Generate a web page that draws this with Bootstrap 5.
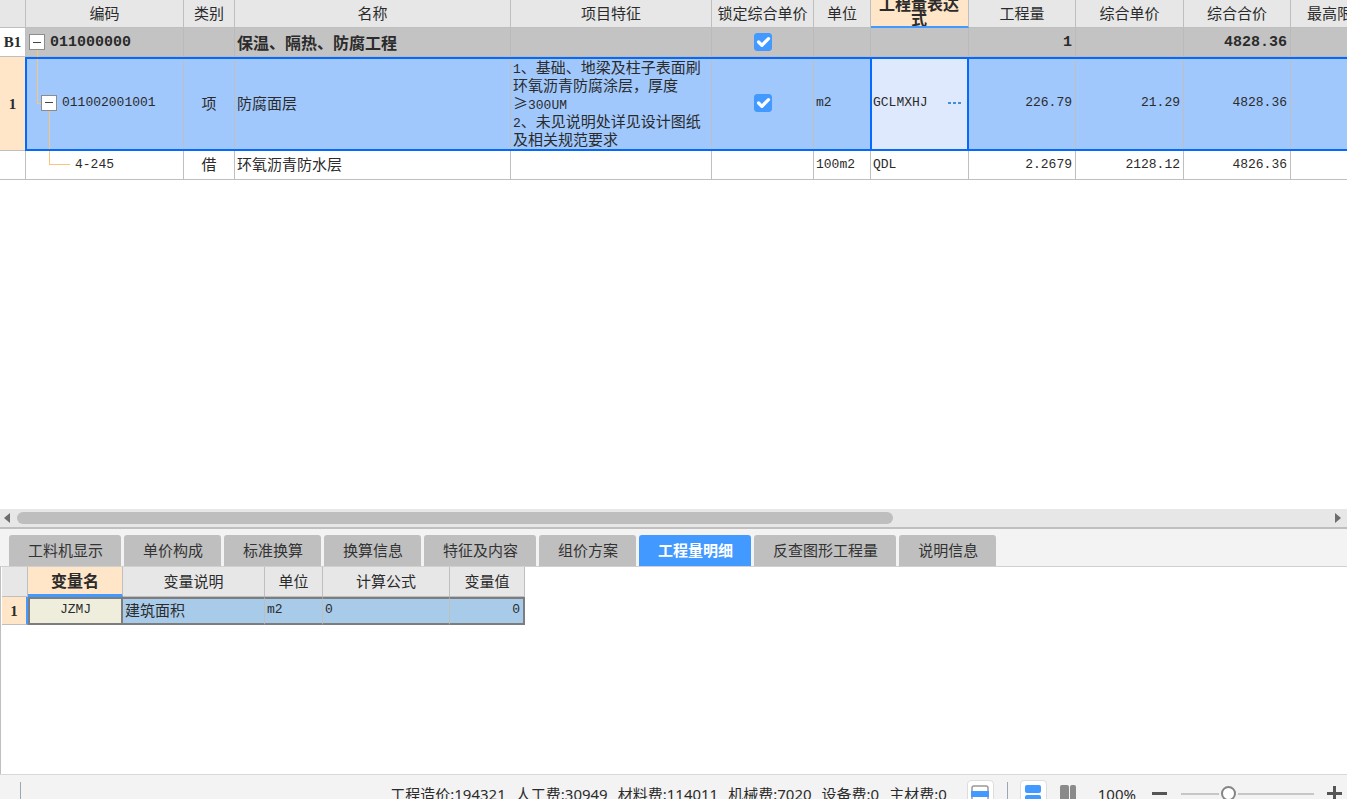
<!DOCTYPE html>
<html lang="zh-CN">
<head>
<meta charset="utf-8">
<meta name="viewport" content="width=device-width, initial-scale=1">
<title>工程量明细</title>
<link href="https://cdn.jsdelivr.net/npm/bootstrap@5.3.0/dist/css/bootstrap.min.css" rel="stylesheet">
<style>
:root { --blue: #4299ff; --sel: #0569fb; --line: #bfbfbf; --head: #e7e7e7; --peach: #ffe6c8; --tree: #fac578; }
body { font-family: "Noto Sans", "Noto Sans CJK SC", sans-serif; font-size: 15px; line-height: 18px; color: #2b2b2b; background: #f3f3f3; }
.pane-top { flex: 510 1 0; min-height: 0; }
.pane-bottom { flex: 207 1 0; min-height: 0; border-top: 1px solid #d0d0d0; border-left: 1px solid var(--line); padding-left: 1px; }
.num { font-family: "Liberation Mono", "Noto Sans CJK SC", monospace; font-size: 13px; line-height: 1; }

.gridview { table-layout: fixed; border-collapse: separate; border-spacing: 0; font-family: "Noto Sans CJK SC", sans-serif; }
.gridview th, .gridview td { padding: 0 2px 2px; border-right: 1px solid var(--line); border-bottom: 1px solid var(--line); vertical-align: middle; position: relative; white-space: nowrap; }
.gridview thead th { background: var(--head); font-weight: 400; text-align: center; padding: 0 2px 2px; }
.gridview thead th.current { background: var(--peach); font-weight: 700; font-size: 16px; border-bottom: 2px solid var(--blue); }
.gridview tbody th { text-align: center; padding: 0; background: #fff; font-family: "Liberation Serif", serif; font-weight: 700; }
.gridview tbody th.current { background: var(--peach); }
.gridview td.text-end { padding-right: 3px; }
.bill { width: 1384px; }
.bill thead tr { height: 28px; }
.bill tbody tr { height: 29px; }
.bill tbody tr.picked { height: 94px; }
.gridview.bill thead th.current { padding: 0; }
.head-wrap { height: 26px; line-height: 15px; white-space: normal; padding: 0 7px 5px 6px; }
.gridview .section-row td { background: #c3c3c3; border-color: #bababa; font-weight: 700; font-size: 16px; padding-bottom: 0; }
.gridview .section-row .num { font-size: 15px; }
.picked td { background: #a0c8fd; }
.picked td::before { content: ""; position: absolute; inset: 0 -1px -1px 0; border: solid var(--sel); border-width: 2px 0; pointer-events: none; z-index: 1; }
.picked td.code::before { border-left-width: 2px; left: -1px; }
.picked td.editing { background: #dfe9fd; }
.picked td.editing::before { border-width: 2px; left: -1px; }
.more { color: #3f8fdc; }

.tree-item { gap: 5px; padding-left: 1px; }
.tree-item.level-2 { padding-left: 13px; }
.tree-item.level-3 { padding-left: 47px; }
.toggle { width: 16px; height: 16px; padding: 0; background: #fff; border: 1px solid #8c8c8c; display: grid; place-items: center; position: relative; z-index: 2; }
.toggle::before { content: ""; width: 8px; height: 1px; background: #444; }
.branch { position: absolute; border-left: 1px solid var(--tree); }
.from-root { left: 11px; top: 21px; bottom: -1px; }
.to-item { left: 11px; top: 0; height: 47px; width: 5px; border-bottom: 1px solid var(--tree); }
.from-item { left: 23px; top: 54px; bottom: 0; }
.to-leaf { left: 23px; top: 0; height: 14px; width: 21px; border-bottom: 1px solid var(--tree); }
.form-check-input.lock[type=checkbox] { width: 18px; height: 18px; margin-top: 0; margin-bottom: 0; border-radius: 3px; display: block; background-size: 22px; background-position: center; }
.lock:checked { background-color: var(--blue); border-color: var(--blue); }

.hbar { height: 18px; background: var(--head); }
.hbar button { width: 17px; height: 18px; padding: 0 3px 0 0; border: 0; background: none; display: grid; place-items: center; }
.hbar button.to-right { width: 14px; padding-right: 4px; }
.hbar-thumb { height: 12px; width: 66.6%; border-radius: 6px; background: #bebebe; }
.splitter { height: 2px; background: #bfbfbf; }

.detail-tabs { height: 37px; padding: 6px 9px 0; gap: 3px; }
.detail-tabs .nav-link { height: 31px; padding: 0 18px 0 19px; border-radius: 3px 3px 0 0; background: #bfbfbf; color: #333; line-height: 31px; white-space: nowrap; }
.detail-tabs .nav-link.active { background: var(--blue); color: #fff; font-weight: 700; }
.vars { width: 523px; }
.vars thead tr { height: 30px; }
.vars tbody tr { height: 28px; }
.vars thead th.current { border-bottom-width: 3px; }
.gridview.vars tbody td { background: #a9cbea; border-bottom: 2px solid #7d7d7d; border-top: 2px solid #7d7d7d; padding-bottom: 3px; }
.vars tbody td:last-child { border-right: 2px solid #7d7d7d; }
.gridview.vars tbody td.editing { background: #efeedd; border: 2px solid #7d7d7d; }
.vars tbody th.current { border-right: 2px solid var(--blue); }

.status { height: 25px; border-top: 1px solid #d8d8d8; overflow: hidden; }
.status-inner { height: 37px; padding: 0 5px 0 20px; }
.status .tick-line { width: 1px; height: 24px; background: #9aa7b5; }
.totals { gap: 10px; margin-right: 20px; white-space: nowrap; }
.tool { width: 27px; height: 27px; padding: 0; border: 1px solid transparent; border-radius: 4px; background: none; display: grid; place-items: center; }
.tool.on { background: #fff; border-color: #ddd; }
.divider { margin: 0 12px 0 13px; }
.zoomer { -webkit-appearance: none; appearance: none; width: 133px; height: 18px; background: none; margin: 0 13px 0 14px; }
.zoomer::-webkit-slider-runnable-track { height: 2px; background: #c6c6c6; }
.zoomer::-webkit-slider-thumb { -webkit-appearance: none; width: 15px; height: 15px; margin-top: -7px; border-radius: 50%; background: #fff; border: 2px solid #858585; box-shadow: 0 0 0 2px #f3f3f3; }
.plain { border: 0; background: none; padding: 0; display: grid; }
</style>
</head>
<body class="vh-100 d-flex flex-column overflow-hidden">

<main class="pane-top bg-white overflow-hidden">
  <table class="gridview bill">
    <colgroup>
      <col style="width:26px"><col style="width:158px"><col style="width:51px"><col style="width:276px"><col style="width:201px"><col style="width:102px"><col style="width:57px"><col style="width:98px"><col style="width:107px"><col style="width:108px"><col style="width:107px"><col style="width:93px">
    </colgroup>
    <thead>
      <tr>
        <th></th><th>编码</th><th>类别</th><th>名称</th><th>项目特征</th><th>锁定综合单价</th><th>单位</th>
        <th class="current"><div class="head-wrap d-flex align-items-center justify-content-center overflow-hidden">工程量表达式</div></th>
        <th>工程量</th><th>综合单价</th><th>综合合价</th><th>最高限价</th>
      </tr>
    </thead>
    <tbody>
      <tr class="section-row">
        <th>B1</th>
        <td><span class="branch from-root"></span><div class="tree-item d-flex align-items-center"><button class="toggle" aria-label="折叠 011000000"></button><span class="num">011000000</span></div></td>
        <td></td><td>保温、隔热、防腐工程</td><td></td>
        <td><input type="checkbox" class="form-check-input lock mx-auto" aria-label="锁定综合单价 011000000" checked></td>
        <td></td><td></td><td class="text-end num">1</td><td></td><td class="text-end num">4828.36</td><td></td>
      </tr>
      <tr class="picked">
        <th class="current">1</th>
        <td class="code"><span class="branch to-item"></span><span class="branch from-item"></span><div class="tree-item level-2 d-flex align-items-center"><button class="toggle" aria-label="折叠 011002001001"></button><span class="num">011002001001</span></div></td>
        <td class="text-center">项</td><td>防腐面层</td>
        <td><span class="num">1</span>、基础、地梁及柱子表面刷<br>环氧沥青防腐涂层，厚度<br>≥<span class="num">300UM</span><br><span class="num">2</span>、未见说明处详见设计图纸<br>及相关规范要求</td>
        <td><input type="checkbox" class="form-check-input lock mx-auto" aria-label="锁定综合单价 011002001001" checked></td>
        <td class="num">m2</td>
        <td class="editing"><div class="d-flex align-items-center justify-content-between"><span class="num">GCLMXHJ</span><button class="plain more pe-1" aria-label="编辑表达式"><svg width="14" height="4" fill="currentColor"><path d="M0 1h3v2H0zM5 1h3v2H5zM10 1h3v2h-3z"/></svg></button></div></td>
        <td class="text-end num">226.79</td><td class="text-end num">21.29</td><td class="text-end num">4828.36</td><td></td>
      </tr>
      <tr>
        <th></th>
        <td><span class="branch to-leaf"></span><div class="tree-item level-3 d-flex align-items-center"><span class="num">4-245</span></div></td>
        <td class="text-center">借</td><td>环氧沥青防水层</td><td></td><td></td><td class="num">100m2</td><td class="num">QDL</td>
        <td class="text-end num">2.2679</td><td class="text-end num">2128.12</td><td class="text-end num">4826.36</td><td></td>
      </tr>
    </tbody>
  </table>
</main>

<div class="hbar d-flex align-items-center">
  <button aria-label="向左滚动"><svg width="6" height="10"><path d="M6 0v10L0 5z" fill="#6b6b70"/></svg></button>
  <div class="flex-grow-1"><div class="hbar-thumb"></div></div>
  <button class="to-right" aria-label="向右滚动"><svg width="6" height="10"><path d="M0 0v10l6-5z" fill="#6b6b70"/></svg></button>
</div>
<div class="splitter"></div>

<nav class="nav detail-tabs flex-nowrap" aria-label="明细">
  <a class="nav-link" href="#">工料机显示</a>
  <a class="nav-link" href="#">单价构成</a>
  <a class="nav-link" href="#">标准换算</a>
  <a class="nav-link" href="#">换算信息</a>
  <a class="nav-link" href="#">特征及内容</a>
  <a class="nav-link" href="#">组价方案</a>
  <a class="nav-link active" href="#" aria-current="page">工程量明细</a>
  <a class="nav-link" href="#">反查图形工程量</a>
  <a class="nav-link" href="#">说明信息</a>
</nav>

<section class="pane-bottom bg-white overflow-hidden">
  <table class="gridview vars">
    <colgroup><col style="width:26px"><col style="width:95px"><col style="width:142px"><col style="width:58px"><col style="width:127px"><col style="width:75px"></colgroup>
    <thead><tr><th></th><th class="current">变量名</th><th>变量说明</th><th>单位</th><th>计算公式</th><th>变量值</th></tr></thead>
    <tbody><tr><th class="current">1</th><td class="editing text-center num">JZMJ</td><td>建筑面积</td><td class="num">m2</td><td class="num">0</td><td class="num text-end">0</td></tr></tbody>
  </table>
</section>

<footer class="status">
  <div class="status-inner d-flex align-items-center">
    <span class="tick-line me-auto"></span>
    <div class="totals d-flex">
      <span>工程造价:194321</span><span>人工费:30949</span><span>材料费:114011</span><span>机械费:7020</span><span>设备费:0</span><span>主材费:0</span>
    </div>
    <button class="tool on" aria-label="单窗格"><svg width="18" height="18"><rect x="1" y="1" width="16" height="16" rx="2" fill="#fff" stroke="#999" stroke-width="1.5"/><path d="M0 6h18v6H0z" fill="#4299ff"/></svg></button>
    <span class="tick-line divider"></span>
    <button class="tool on" aria-label="上下布局"><svg width="16" height="18" fill="#4299ff"><rect width="16" height="8" rx="2"/><rect y="10" width="16" height="8" rx="2"/></svg></button>
    <button class="tool ms-2" aria-label="左右布局"><svg width="16" height="18" fill="#8a8a8a"><rect width="9" height="18" rx="2"/><rect x="10" width="6" height="18" rx="2"/></svg></button>
    <label class="ms-3 me-3" for="zoom">100%</label>
    <button class="plain" aria-label="缩小"><svg width="15" height="15"><path d="M0 6h15v3H0z" fill="#555"/></svg></button>
    <input class="zoomer" id="zoom" type="range" min="0" max="100" value="34">
    <button class="plain" aria-label="放大"><svg width="15" height="15"><path d="M0 6h6V0h3v6h6v3H9v6H6V9H0z" fill="#555"/></svg></button>
  </div>
</footer>

<script src="https://cdn.jsdelivr.net/npm/bootstrap@5.3.0/dist/js/bootstrap.bundle.min.js"></script>
</body>
</html>
